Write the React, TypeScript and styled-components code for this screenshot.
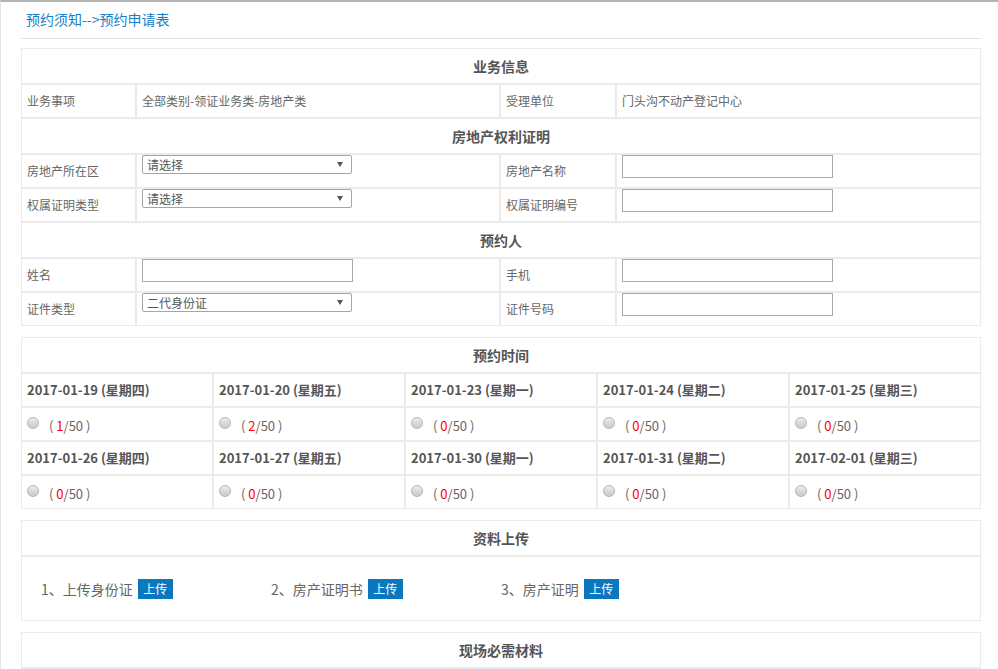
import React from "react";
import styled, { createGlobalStyle } from "styled-components";

const GlobalStyle = createGlobalStyle`
  html, body { margin: 0; padding: 0; background: #fff; }
  body {
    font-family: "Noto Sans CJK SC", "Noto Sans", sans-serif;
    font-size: 12px;
    color: #666;
  }
  * { box-sizing: border-box; }
`;

const Page = styled.div`
  border-top: 2px solid #b4b4b4;
  border-left: 1px solid #e4e4e4;
  padding: 0 17px 24px 20px;
  min-height: 669px;
`;

const Content = styled.div`
  width: 960px;
`;

const Crumb = styled.div`
  padding: 6px 5px 8px;
  line-height: 22px;
  font-size: 14px;
  color: #1580c6;
  border-bottom: 1px solid #e2e2e2;
  margin-bottom: 9px;
`;

const Stack = styled.div`
  display: flex;
  flex-direction: column;
  gap: 11px;
`;

const Panel = styled.div<{ $cols: string }>`
  display: grid;
  grid-template-columns: ${(p) => p.$cols};
`;

const SectionTitle = styled.div`
  grid-column: 1 / -1;
  height: 36px;
  border: 1px solid #ebebeb;
  display: flex;
  align-items: center;
  justify-content: center;
  font-size: 14px;
  font-weight: bold;
  color: #555;
  line-height: 20px;
`;

const Cell = styled.div<{ $top?: boolean }>`
  height: 34px;
  border: 1px solid #ebebeb;
  padding: 0 5px;
  display: flex;
  align-items: ${(p) => (p.$top ? "flex-start" : "center")};
  line-height: 18px;
  font-size: 12px;
  color: #666;
`;

const SelectBox = styled.div`
  width: 210px;
  height: 19px;
  border: 1px solid #a5a5a5;
  border-radius: 2px;
  padding: 0 8px 0 4px;
  display: flex;
  align-items: center;
  justify-content: space-between;
  font-size: 12px;
  line-height: 17px;
  color: #555;
  background: #fff;
`;

const TextInput = styled.input`
  width: 211px;
  height: 23px;
  border: 1px solid #a9a9a9;
  margin: 0;
  padding: 0 4px;
  font: inherit;
  outline: none;
`;

const DateHead = styled(Cell)`
  font-size: 13px;
  font-weight: bold;
  color: #555;
`;

const Radio = styled.input.attrs({ type: "radio" })`
  appearance: none;
  width: 12px;
  height: 12px;
  margin: 0 10px 3px 0;
  border: 1px solid #b5b5b5;
  border-radius: 50%;
  background: linear-gradient(#ececec, #c9c9c9);
  flex: none;
`;

const Count = styled.span`
  font-size: 13px;
  color: #666;
  padding-top: 3px;
  white-space: pre;
`;

const Red = styled.span`
  color: #f00;
`;

const UploadBody = styled.div`
  grid-column: 1 / -1;
  height: 65px;
  border: 1px solid #ebebeb;
  padding: 0 19px;
  display: flex;
  align-items: center;
`;

const UploadItem = styled.div`
  width: 230px;
  display: flex;
  align-items: center;
  font-size: 14px;
  line-height: 20px;
  color: #666;
`;

const UploadButton = styled.button`
  width: 35px;
  height: 20px;
  margin-left: 5px;
  padding: 0;
  border: none;
  background: #0a77bf;
  color: #fff;
  font: inherit;
  font-size: 12px;
  line-height: 20px;
`;

const EmptyBody = styled.div`
  grid-column: 1 / -1;
  height: 60px;
  border: 1px solid #ebebeb;
`;

const Arrow = () => (
  <svg width="6" height="5" viewBox="0 0 6 5">
    <polygon points="0,0 6,0 3,5" fill="#555" />
  </svg>
);

const Select = ({ value }: { value: string }) => (
  <SelectBox>
    <span>{value}</span>
    <Arrow />
  </SelectBox>
);

const formCols = "115px 364px 116px 365px";

const dates = [
  ["2017-01-19 (星期四)", 1],
  ["2017-01-20 (星期五)", 2],
  ["2017-01-23 (星期一)", 0],
  ["2017-01-24 (星期二)", 0],
  ["2017-01-25 (星期三)", 0],
  ["2017-01-26 (星期四)", 0],
  ["2017-01-27 (星期五)", 0],
  ["2017-01-30 (星期一)", 0],
  ["2017-01-31 (星期二)", 0],
  ["2017-02-01 (星期三)", 0],
] as const;

const uploads = ["1、上传身份证", "2、房产证明书", "3、房产证明"];

export default function App() {
  const rows = [dates.slice(0, 5), dates.slice(5, 10)];
  return (
    <>
      <GlobalStyle />
      <Page>
        <Content>
          <Crumb>预约须知--&gt;预约申请表</Crumb>
          <Stack>
            <Panel $cols={formCols}>
              <SectionTitle>业务信息</SectionTitle>
              <Cell>业务事项</Cell>
              <Cell>全部类别-领证业务类-房地产类</Cell>
              <Cell>受理单位</Cell>
              <Cell>门头沟不动产登记中心</Cell>

              <SectionTitle>房地产权利证明</SectionTitle>
              <Cell>房地产所在区</Cell>
              <Cell $top>
                <Select value="请选择" />
              </Cell>
              <Cell>房地产名称</Cell>
              <Cell $top>
                <TextInput />
              </Cell>
              <Cell>权属证明类型</Cell>
              <Cell $top>
                <Select value="请选择" />
              </Cell>
              <Cell>权属证明编号</Cell>
              <Cell $top>
                <TextInput />
              </Cell>

              <SectionTitle>预约人</SectionTitle>
              <Cell>姓名</Cell>
              <Cell $top>
                <TextInput />
              </Cell>
              <Cell>手机</Cell>
              <Cell $top>
                <TextInput />
              </Cell>
              <Cell>证件类型</Cell>
              <Cell $top>
                <Select value="二代身份证" />
              </Cell>
              <Cell>证件号码</Cell>
              <Cell $top>
                <TextInput />
              </Cell>
            </Panel>

            <Panel $cols="repeat(5, 192px)">
              <SectionTitle>预约时间</SectionTitle>
              {rows.map((row, ri) => (
                <React.Fragment key={ri}>
                  {row.map(([d]) => (
                    <DateHead key={d}>{d}</DateHead>
                  ))}
                  {row.map(([d, n]) => (
                    <Cell key={d + "s"}>
                      <Radio name="slot" />
                      <Count>
                        {"( "}
                        <Red>{n}</Red>
                        {"/50 )"}
                      </Count>
                    </Cell>
                  ))}
                </React.Fragment>
              ))}
            </Panel>

            <Panel $cols="1fr">
              <SectionTitle>资料上传</SectionTitle>
              <UploadBody>
                {uploads.map((u) => (
                  <UploadItem key={u}>
                    {u}
                    <UploadButton>上传</UploadButton>
                  </UploadItem>
                ))}
              </UploadBody>
            </Panel>

            <Panel $cols="1fr">
              <SectionTitle>现场必需材料</SectionTitle>
              <EmptyBody />
            </Panel>
          </Stack>
        </Content>
      </Page>
    </>
  );
}
